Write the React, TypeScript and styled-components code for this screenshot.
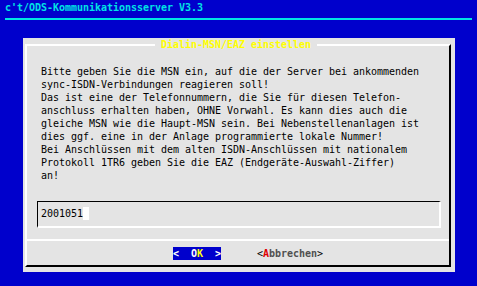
import React from 'react';
import styled, { createGlobalStyle } from 'styled-components';

const Global = createGlobalStyle`
    html, body {
        margin: 0;
        padding: 0;
        background: #0000cc;
        width: 477px;
        height: 286px;
        overflow: hidden;
    }
    body {
        font-family: "DejaVu Sans Mono", "Liberation Mono", monospace;
        font-size: 10px;
        line-height: 13px;
        letter-spacing: -0.02px;
    }
`;

const Screen = styled.div`
    width: 477px;
    height: 286px;
    background: #0000cc;
    display: flex;
    flex-direction: column;
`;

const Header = styled.div`
    padding: 1px 5px 0;
    height: 13px;
    color: #00e4e4;
    font-weight: bold;
    white-space: pre;
`;

const Rule = styled.div`
    margin: 4px 5px 0;
    height: 2px;
    background: #00e4e4;
`;

const Dialog = styled.div`
    margin: 18px 0 0 23px;
    width: 432px;
    height: 234px;
    background: #e4e4e4;
    display: flex;
    box-sizing: border-box;
    padding: 6px 4px 5px 2px;
`;

const Frame = styled.div`
    position: relative;
    flex: 1;
    display: flex;
    flex-direction: column;
    border-style: solid;
    border-width: 2px;
    border-color: #fff #000 #000 #fff;
`;

const Title = styled.div`
    position: absolute;
    top: -8px;
    left: 128px;
    padding: 0 6px;
    background: #e4e4e4;
    color: #ffff00;
    font-weight: bold;
    white-space: pre;
`;

const Body = styled.div`
    padding: 19px 14px 0;
    color: #000;
    white-space: pre;
`;

const InputBox = styled.div`
    margin: 19px 8px 0 10px;
    height: 27px;
    box-sizing: border-box;
    border-style: solid;
    border-width: 1px 2px 2px 1px;
    border-color: #000 #fff #fff #000;
    padding: 5px 3px 0;
    display: flex;
    align-items: flex-start;
    color: #000;
`;

const Cursor = styled.span`
    display: inline-block;
    width: 6px;
    height: 13px;
    background: #fff;
`;

const Separator = styled.div`
    margin-top: 11px;
    height: 2px;
    background: #fff;
`;

const ButtonRow = styled.div`
    flex: 1;
    display: flex;
    align-items: center;
    padding-left: 146px;
    gap: 36px;
`;

const Button = styled.span<{ $active?: boolean }>`
    white-space: pre;
    height: 13px;
    font-weight: bold;
    color: ${(p) => (p.$active ? '#fff' : '#505050')};
    background: ${(p) => (p.$active ? '#0000cc' : 'transparent')};
`;

const Hot = styled.span<{ $color: string }>`
    color: ${(p) => p.$color};
`;

const Bracket = styled.span`
    font-weight: normal;
    color: #000;
`;

const lines = [
    'Bitte geben Sie die MSN ein, auf die der Server bei ankommenden',
    'sync-ISDN-Verbindungen reagieren soll!',
    'Das ist eine der Telefonnummern, die Sie für diesen Telefon-',
    'anschluss erhalten haben, OHNE Vorwahl. Es kann dies auch die',
    'gleiche MSN wie die Haupt-MSN sein. Bei Nebenstellenanlagen ist',
    'dies ggf. eine in der Anlage programmierte lokale Nummer!',
    'Bei Anschlüssen mit dem alten ISDN-Anschlüssen mit nationalem',
    'Protokoll 1TR6 geben Sie die EAZ (Endgeräte-Auswahl-Ziffer)',
    'an!',
];

const App = () => {
    return (
        <Screen>
            <Global />
            <Header>c't/ODS-Kommunikationsserver V3.3</Header>
            <Rule />
            <Dialog>
                <Frame>
                    <Title>Dialin-MSN/EAZ einstellen</Title>
                    <Body>{lines.join('\n')}</Body>
                    <InputBox>
                        2001051
                        <Cursor />
                    </InputBox>
                    <Separator />
                    <ButtonRow>
                        <Button $active>
                            {'<  O'}
                            <Hot $color="#ffff00">K</Hot>
                            {'  >'}
                        </Button>
                        <Button>
                            <Bracket>{'<'}</Bracket>
                            <Hot $color="#e00000">A</Hot>
                            bbrechen
                            <Bracket>{'>'}</Bracket>
                        </Button>
                    </ButtonRow>
                </Frame>
            </Dialog>
        </Screen>
    );
};

export default App;
